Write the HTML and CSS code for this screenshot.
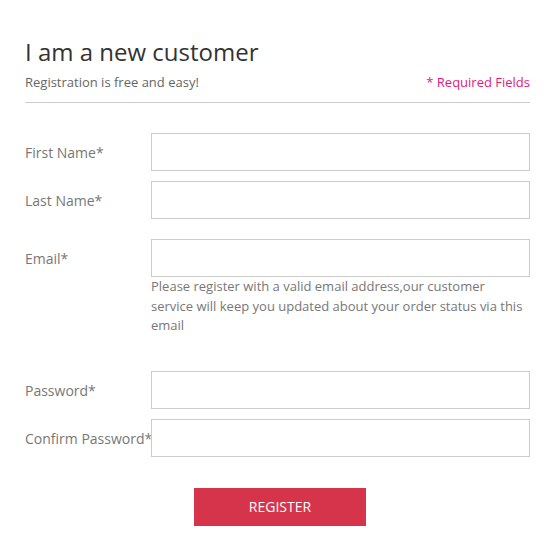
FILE: index.html
```html
<!DOCTYPE html>
<html>
<head>
<meta charset="utf-8">
<link rel="stylesheet" href="styles.css">
</head>
<body>
<div class="page">
  <h1 class="title">I am a new customer</h1>
  <div class="subhead">
    <span class="sub">Registration is free and easy!</span>
    <span class="req">* Required Fields</span>
  </div>
  <form class="form">
    <div class="row">
      <label class="label">First Name*</label>
      <div class="field"><input class="input" type="text"></div>
    </div>
    <div class="row">
      <label class="label">Last Name*</label>
      <div class="field"><input class="input" type="text"></div>
    </div>
    <div class="row row-email">
      <label class="label">Email*</label>
      <div class="field">
        <input class="input" type="text">
        <p class="help">Please register with a valid email address,our customer service will keep you updated about your order status via this email</p>
      </div>
    </div>
    <div class="row row-pass">
      <label class="label">Password*</label>
      <div class="field"><input class="input" type="password"></div>
    </div>
    <div class="row">
      <label class="label">Confirm Password*</label>
      <div class="field"><input class="input" type="password"></div>
    </div>
    <div class="actions">
      <button class="btn" type="button">REGISTER</button>
    </div>
  </form>
</div>
</body>
</html>
```

FILE: styles.css
```css
* { box-sizing: border-box; }
html, body { margin: 0; padding: 0; background: #fff; }
body { font-family: "Open Sans", "Liberation Sans", sans-serif; color: #333; }
.page { padding: 36px 25px 0 25px; }
.title {
  margin: 0;
  font-size: 24px;
  font-weight: 400;
  line-height: 32px;
  color: #333;
}
.subhead {
  display: flex;
  justify-content: space-between;
  align-items: baseline;
  margin-top: 4px;
  padding-bottom: 10px;
  border-bottom: 1px solid #ccc;
  font-size: 13px;
  line-height: 20px;
}
.sub { color: #666; }
.req { color: #e5177e; }
.form { padding-top: 30px; }
.row { display: flex; align-items: flex-start; margin-bottom: 10px; }
.row-email { margin-top: 20px; }
.row-pass { margin-top: 35px; }
.label {
  width: 126px;
  flex: none;
  font-size: 14px;
  line-height: 36px;
  padding-top: 2px;
  color: #777;
  white-space: nowrap;
}
.field { flex: 1; }
.input {
  display: block;
  width: 100%;
  height: 38px;
  border: 1px solid #ccc;
  border-radius: 0;
  margin: 0;
  padding: 0 10px;
  background: #fff;
  font-family: inherit;
}
.help {
  margin: 0;
  font-size: 13px;
  line-height: 19.5px;
  color: #777;
}
.actions { display: flex; justify-content: center; padding: 21px 0 0 5px; }
.btn {
  width: 172px;
  height: 38px;
  border: 0;
  background: #d6344a;
  color: #fff;
  font-family: inherit;
  font-size: 14px;
  padding: 0;
}
```
